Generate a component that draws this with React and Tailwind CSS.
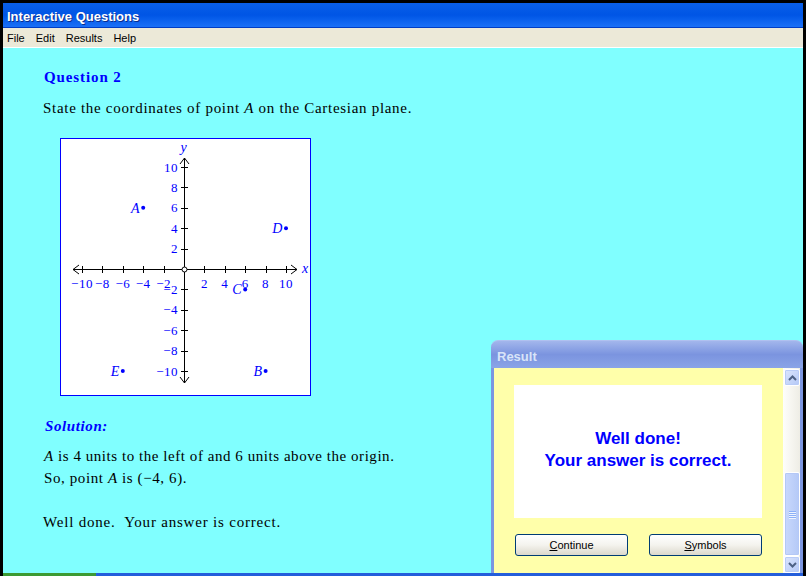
import React from "react";

// graph scale: px per unit, origin inside the white box
const U = 10.2;
const X = (v) => 123 + v * U;
const Y = (v) => 130 - v * U;
const ticks = [-10, -8, -6, -4, -2, 2, 4, 6, 8, 10];
const label = (v) => (v < 0 ? "\u2212" + Math.abs(v) : String(v));

const points = [
  { name: "A", x: -4, y: 6 },
  { name: "D", x: 10, y: 4 },
  { name: "C", x: 6, y: -2 },
  { name: "B", x: 8, y: -10 },
  { name: "E", x: -6, y: -10 },
];

const serif = "font-['Liberation_Serif','Times_New_Roman',serif]";
const sans = "font-['Liberation_Sans',Arial,sans-serif]";

const Graph = () => (
  <div className="ml-[17px] mt-[21px] w-[251px] h-[258px] border border-[#0000ff] bg-white">
    <svg width="249" height="256" className="block">
      {/* axes */}
      <g stroke="#000" strokeWidth="1" fill="none">
        <line x1="12" y1="130.5" x2="236" y2="130.5" />
        <line x1="123.5" y1="19" x2="123.5" y2="244" />
        <polyline points="18,126 12,130.5 18,135" />
        <polyline points="230,126 236,130.5 230,135" />
        <polyline points="119,25 123.5,19 128,25" />
        <polyline points="119,238 123.5,244 128,238" />
        {ticks.map((v) => (
          <line key={"tx" + v} x1={Math.round(X(v)) + 0.5} y1="127" x2={Math.round(X(v)) + 0.5} y2="134" />
        ))}
        {ticks.map((v) => (
          <line key={"ty" + v} x1="120" y1={Math.round(Y(v)) + 0.5} x2="127" y2={Math.round(Y(v)) + 0.5} />
        ))}
        <circle cx="123.5" cy="130.5" r="2.5" fill="#fff" />
      </g>
      <g fill="#0000ff" fontFamily="'Liberation Serif','Times New Roman',serif" fontSize="13" letterSpacing="0.5">
        {ticks.map((v) => (
          <text key={"lx" + v} x={X(v)} y="149" textAnchor="middle">
            {label(v)}
          </text>
        ))}
        {ticks.map((v) => (
          <text key={"ly" + v} x="117" y={Y(v) + 4.5} textAnchor="end">
            {label(v)}
          </text>
        ))}
      </g>
      <g fill="#0000ff" fontFamily="'Liberation Serif','Times New Roman',serif" fontSize="14" fontStyle="italic">
        <text x="241" y="134">x</text>
        <text x="123" y="13" textAnchor="middle">y</text>
        {points.map((p) => (
          <g key={p.name}>
            <circle cx={X(p.x)} cy={Y(p.y)} r="2" />
            <text x={X(p.x) - 3} y={Y(p.y) + 5} textAnchor="end">
              {p.name}
            </text>
          </g>
        ))}
      </g>
    </svg>
  </div>
);

const Chevron = ({ up }) => (
  <svg width="9" height="6" viewBox="0 0 9 6">
    <polyline
      points={up ? "1,5 4.5,1.5 8,5" : "1,1 4.5,4.5 8,1"}
      fill="none"
      stroke="#4d6185"
      strokeWidth="2"
    />
  </svg>
);

const ScrollButton = ({ up }) => (
  <div className="h-[17px] w-[16px] flex items-center justify-center rounded-[2px] border border-white bg-gradient-to-br from-[#dce6fd] to-[#b4c8f6] shadow-[inset_0_0_0_1px_#b9ccf7]">
    <Chevron up={up} />
  </div>
);

const XpButton = ({ first, rest }) => (
  <button
    type="button"
    className={`w-[113px] h-[22px] rounded-[3px] border border-[#003c74] bg-gradient-to-b from-white via-[#f4f3ee] to-[#dcd8cc] text-[11px] text-black ${sans}`}
  >
    <span className="underline">{first}</span>
    {rest}
  </button>
);

const ResultDialog = () => (
  <div className="absolute left-[491px] top-[340px] w-[312px] h-[233px] flex flex-col">
    <div className="h-[28px] rounded-t-[7px] bg-gradient-to-b from-[#a3b6ec] via-[#7b94df] to-[#8aa4e7] border-t border-[#b0c1f0] flex items-center pl-[6px] pt-[4px]">
      <span className={`text-[13px] font-bold text-[#d8e4f8] ${sans}`}>Result</span>
    </div>
    <div className="flex-1 flex bg-[#7c96e0]">
      <div className="w-[3px]" />
      <div className="flex-1 bg-[#ffffaa] flex flex-col">
        <div
          className={`ml-[20px] mt-[17px] w-[248px] h-[133px] bg-white flex flex-col items-center justify-center pb-[4px] text-[17px] font-bold leading-[22px] text-[#0000ff] ${sans}`}
        >
          <div>Well done!</div>
          <div>Your answer is correct.</div>
        </div>
        <div className="mt-[16px] ml-[21px] flex gap-[21px]">
          <XpButton first="C" rest="ontinue" />
          <XpButton first="S" rest="ymbols" />
        </div>
      </div>
      <div className="w-[17px] flex flex-col bg-gradient-to-r from-[#fefefb] to-[#eeede5] pt-[1px] pl-[1px]">
        <ScrollButton up />
        <div className="flex-1" />
        <div className="h-[84px] w-[16px] rounded-[2px] border border-white bg-gradient-to-r from-[#c9d8fc] to-[#b4c9f7] shadow-[inset_0_0_0_1px_#b4c8f6] flex flex-col items-center justify-center gap-[1px]">
          {[0, 1, 2, 3].map((i) => (
            <div key={i} className="w-[7px] h-[1px] bg-[#8cb0f8] shadow-[0_1px_0_#eef4fe]" />
          ))}
        </div>
        <ScrollButton />
      </div>
      <div className="w-[3px]" />
    </div>
  </div>
);

export default function App() {
  return (
    <div className="relative w-[806px] h-[576px] overflow-hidden bg-black pt-[3px] px-[3px] flex flex-col">
      {/* title bar */}
      <div className="h-[25px] bg-gradient-to-b from-[#0a5fe8] via-[#0055e5] to-[#1a70f7] border-b border-[#003dc5] flex items-center pl-[4px] pt-[3px]">
        <span className={`text-[13px] font-bold text-white [text-shadow:1px_1px_0_#0b2d8c] ${sans}`}>
          Interactive Questions
        </span>
      </div>
      {/* menu */}
      <div className={`h-[20px] bg-[#ece9d8] border-b border-white flex items-center pl-[4px] pt-[1px] gap-[11px] text-[11px] text-black ${sans}`}>
        <span>File</span>
        <span>Edit</span>
        <span>Results</span>
        <span>Help</span>
      </div>
      {/* content */}
      <div className={`flex-1 bg-[#80ffff] pl-[40px] text-[15px] leading-[18px] tracking-[0.6px] text-black ${serif}`}>
        <div className="mt-[20px] ml-[1px] font-bold tracking-[0.9px] text-[#0000ff]">Question 2</div>
        <div className="mt-[13px] tracking-[0.7px]">
          State the coordinates of point <i>A</i> on the Cartesian plane.
        </div>
        <Graph />
        <div className="mt-[21px] ml-[2px] font-bold italic text-[#0000ff]">Solution:</div>
        <div className="mt-[12px] ml-[1px] tracking-[0.55px]">
          <i>A</i> is 4 units to the left of and 6 units above the origin.
        </div>
        <div className="mt-[4px] ml-[1px]">
          So, point <i>A</i> is (&minus;4, 6).
        </div>
        <div className="mt-[26px] tracking-[0.8px]">Well done.&nbsp; Your answer is correct.</div>
      </div>
      {/* taskbar peeking at the bottom */}
      <div className="h-[3px] flex">
        <div className="w-[93px] bg-[#3c9a33]" />
        <div className="flex-1 bg-[#245edb]" />
      </div>
      <ResultDialog />
    </div>
  );
}
